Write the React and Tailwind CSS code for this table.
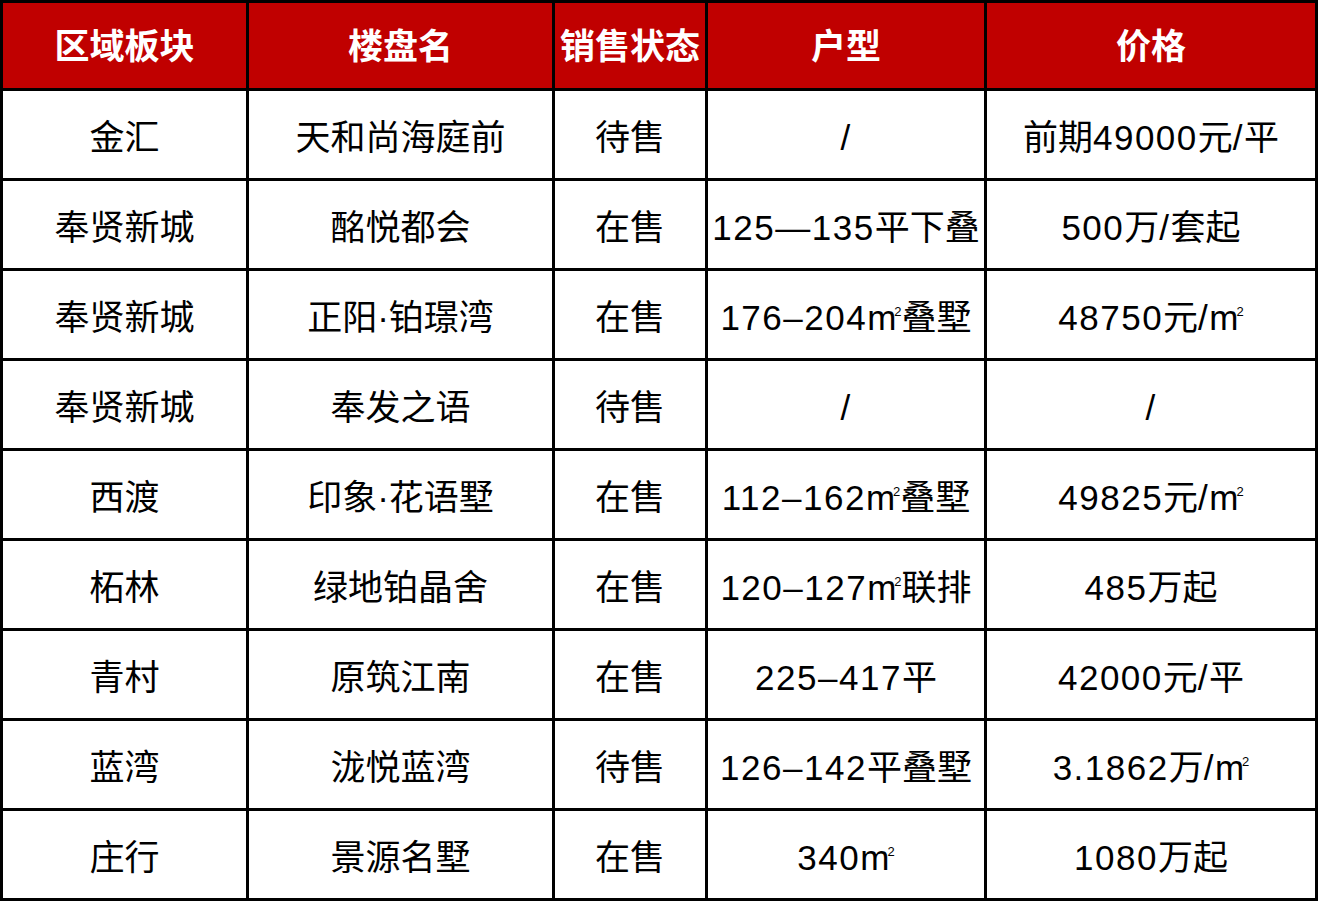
const headers = ['区域板块', '楼盘名', '销售状态', '户型', '价格']

// 'M2' marks a square-metre sign
const rows = [
  ['金汇', '天和尚海庭前', '待售', '/', '前期49000元/平'],
  ['奉贤新城', '酩悦都会', '在售', '125—135平下叠', '500万/套起'],
  ['奉贤新城', '正阳·铂璟湾', '在售', ['176–204', 'M2', '叠墅'], ['48750元/', 'M2']],
  ['奉贤新城', '奉发之语', '待售', '/', '/'],
  ['西渡', '印象·花语墅', '在售', ['112–162', 'M2', '叠墅'], ['49825元/', 'M2']],
  ['柘林', '绿地铂晶舍', '在售', ['120–127', 'M2', '联排'], '485万起'],
  ['青村', '原筑江南', '在售', '225–417平', '42000元/平'],
  ['蓝湾', '泷悦蓝湾', '待售', '126–142平叠墅', ['3.1862万/', 'M2']],
  ['庄行', '景源名墅', '在售', ['340', 'M2'], '1080万起'],
]

function Sqm() {
  return (
    <span className="tracking-normal">
      m<span className="relative -top-[14px] -ml-[2px] text-[13px]">2</span>
    </span>
  )
}

// latin runs get a little extra spacing so digits match the wider original
function Runs({ text }) {
  return text.split(/([0-9./–—]+)/).map((run, i) =>
    /^[0-9./–—]+$/.test(run) ? (
      <span key={i} className="tracking-[1.5px]">{run}</span>
    ) : (
      <span key={i}>{run}</span>
    )
  )
}

function CellText({ value }) {
  const parts = Array.isArray(value) ? value : [value]
  return parts.map((part, i) => (part === 'M2' ? <Sqm key={i} /> : <Runs key={i} text={part} />))
}

export default function App() {
  return (
    <div
      className="min-h-screen bg-white"
      style={{ fontFamily: '"Liberation Sans", "Noto Sans CJK SC", sans-serif' }}
    >
      <div className="grid w-[1318px] grid-cols-[243px_303px_150px_276px_328px] gap-[3px] bg-black p-[3px]">
        {headers.map((h) => (
          <div
            key={h}
            className="flex h-[85px] items-center justify-center whitespace-nowrap bg-[#c00000] pt-[4px] text-[35px] font-bold text-white"
          >
            {h}
          </div>
        ))}
        {rows.map((row, r) =>
          row.map((cell, c) => (
            <div
              key={r + '-' + c}
              className="flex h-[87px] items-center justify-center whitespace-nowrap bg-white pt-[7px] text-[35px] text-black"
            >
              <CellText value={cell} />
            </div>
          ))
        )}
      </div>
    </div>
  )
}
